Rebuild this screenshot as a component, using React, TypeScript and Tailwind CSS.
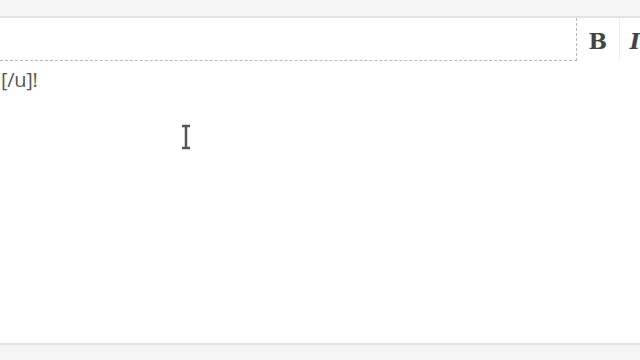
import React from 'react';

export default function App() {
  return (
    <div className="w-[640px] h-[360px] bg-[#f5f5f5] overflow-hidden relative" style={{ fontFamily: '"Open Sans", sans-serif' }}>
      <div className="mt-[16px] h-[329px] bg-white border-y-2 border-[#e2e2e2] flex flex-col">
        <div className="flex h-[43px]">
          <div className="w-[578px] border-r border-b border-dashed border-[#b8b8b8]" />
          <div className="w-[43px] flex items-center justify-center border-r border-[#ececec] pt-[4px]">
            <span className="text-[22px] font-bold text-[#444]" style={{ fontFamily: '"DejaVu Serif", serif' }}>B</span>
          </div>
          <div className="flex-1 flex items-center pl-[10px] pt-[4px]">
            <span className="text-[22px] font-bold italic text-[#444]" style={{ fontFamily: '"DejaVu Serif", serif' }}>I</span>
          </div>
        </div>
        <div className="pt-[5px] pl-[1px] text-[20px] leading-[28px] text-[#555] tracking-[-0.3px]">[/u]!</div>
      </div>
      <svg className="absolute left-[180px] top-[124px]" width="12" height="26" viewBox="0 0 12 26">
        <path d="M2 2h8M6 2v22M2 24h8" stroke="#555" strokeWidth="2.5" fill="none" />
      </svg>
    </div>
  );
}
